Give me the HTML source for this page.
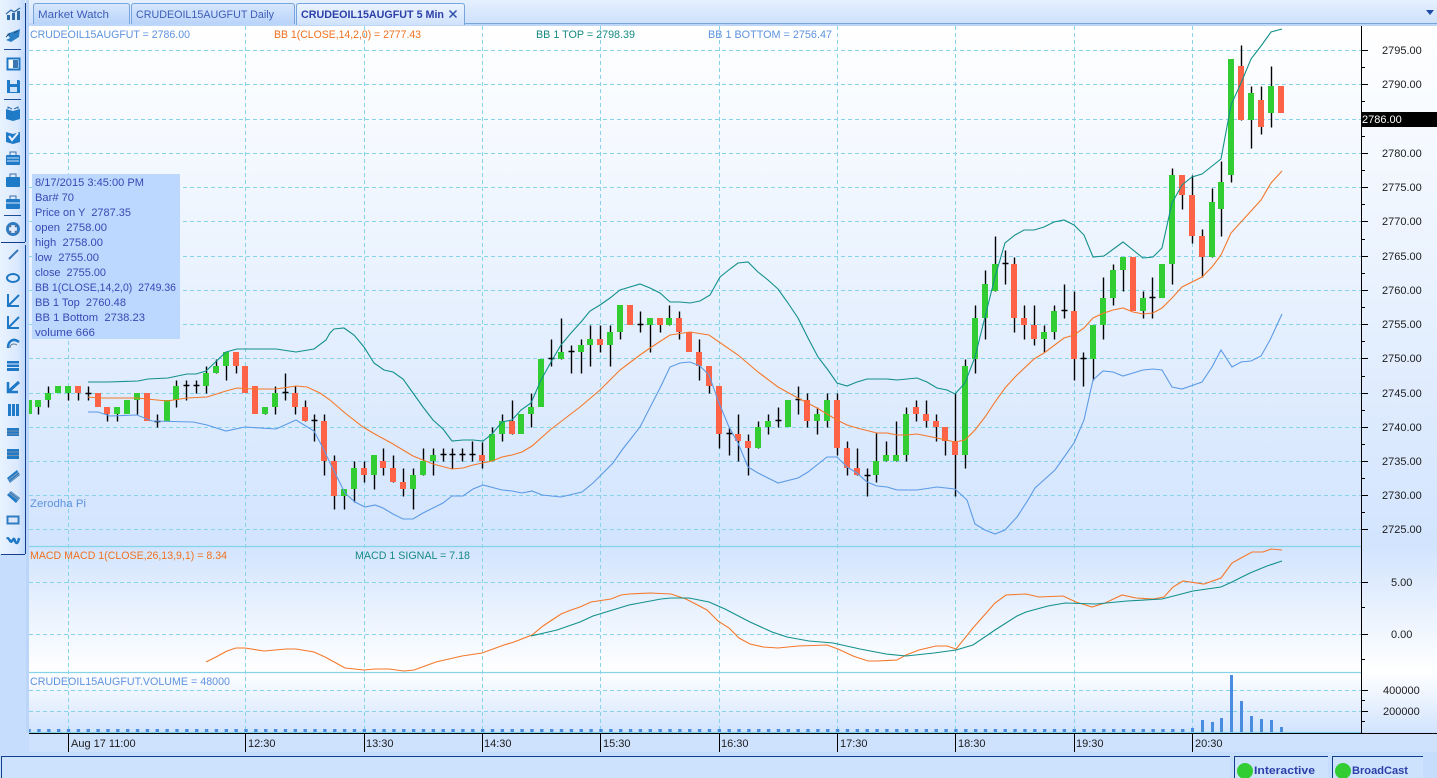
<!DOCTYPE html>
<html lang="en"><head><meta charset="utf-8"><title>Zerodha Pi</title>
<style>
html,body{margin:0;padding:0;background:#c6ddfd;width:1437px;height:778px;overflow:hidden}
svg{display:block}
text{font-family:"Liberation Sans",Arial,sans-serif;font-size:11px;white-space:pre}
.ax{fill:#1c1c1c}
.tip{fill:#3a48b4}
</style></head><body>
<svg width="1437" height="778" viewBox="0 0 1437 778" xmlns="http://www.w3.org/2000/svg">
<defs>
<linearGradient id="p1" x1="0" y1="0" x2="0" y2="1"><stop offset="0" stop-color="#fff"/><stop offset="1" stop-color="#d2e4fe"/></linearGradient>
<linearGradient id="p2" x1="0" y1="0" x2="0" y2="1"><stop offset="0" stop-color="#d2e4fe"/><stop offset="1" stop-color="#fff"/></linearGradient>
<linearGradient id="tb" x1="0" y1="0" x2="1" y2="0"><stop offset="0" stop-color="#e9f3ff"/><stop offset=".7" stop-color="#dbe9fe"/><stop offset="1" stop-color="#bfd8fa"/></linearGradient>
<linearGradient id="tab" x1="0" y1="0" x2="0" y2="1"><stop offset="0" stop-color="#d8e8fe"/><stop offset="1" stop-color="#b9d4fa"/></linearGradient>
<linearGradient id="tabA" x1="0" y1="0" x2="0" y2="1"><stop offset="0" stop-color="#ecf4ff"/><stop offset="1" stop-color="#cfe2fc"/></linearGradient>
<linearGradient id="top" x1="0" y1="0" x2="0" y2="1"><stop offset="0" stop-color="#e6f0fe"/><stop offset="1" stop-color="#cfe1fb"/></linearGradient>
</defs>

<!-- base -->
<rect width="1437" height="778" fill="#c6ddfd"/>
<rect x="0" y="0" width="1437" height="23" fill="url(#top)"/>
<rect x="0" y="23" width="1437" height="3" fill="#bcd7f9"/>

<!-- panes -->
<rect x="29" y="26" width="1408" height="520" fill="url(#p1)"/>
<rect x="29" y="546" width="1408" height="126" fill="url(#p2)"/>
<rect x="29" y="672" width="1408" height="60" fill="url(#p1)"/>
<rect x="29" y="733" width="1408" height="19" fill="#cfe2fd"/>

<!-- grid -->
<path d="M29 50.5H1361M29 84.5H1361M29 119.5H1361M29 153.5H1361M29 187.5H1361M29 221.5H1361M29 256.5H1361M29 290.5H1361M29 324.5H1361M29 358.5H1361M29 393.5H1361M29 427.5H1361M29 461.5H1361M29 495.5H1361M29 529.5H1361M29 582.5H1361M29 634.5H1361M29 690.5H1361M29 711.5H1361" stroke="#86d3ea" stroke-dasharray="4 3" fill="none"/>
<path d="M68.5 26V732M245.5 26V732M364.5 26V732M482.5 26V732M600.5 26V732M719.5 26V732M837.5 26V732M955.5 26V732M1074.5 26V732M1192.5 26V732" stroke="#86d3ea" stroke-dasharray="4 3" fill="none"/>
<path d="M29 546.5H1361M29 672.5H1361M29 732.5H1361" stroke="#86d3ea" stroke-width="1.2" fill="none"/>

<!-- wicks -->
<path transform="translate(.5 .5)" stroke="#000" stroke-width="1.4" fill="none" d="M38 400V414M48 386V407M68 386V400M78 386V400M88 386V400M85 393H91M107 407V421M117 407V421M137 393V414M157 414V427M154 421H160M176 380V407M186 380V400M183 385H189M196 380V393M193 385H199M206 366V393M216 359V373M226 352V380M236 352V373M265 407V414M275 386V414M285 373V400M282 392H288M295 386V414M305 400V421M314 414V441M311 420H317M324 414V475M334 455V509M344 489V509M354 461V502M364 461V482M374 455V489M383 448V475M393 455V482M403 468V496M413 468V509M423 448V475M433 448V475M443 448V461M440 454H446M452 448V468M449 454H455M462 448V461M459 454H465M472 441V461M469 454H475M482 442V468M492 427V461M502 414V441M512 400V434M531 393V427M551 339V366M548 358H554M561 318V359M571 345V373M568 351H574M581 339V373M590 325V366M600 325V352M610 325V366M620 305V339M640 311V332M637 324H643M650 318V352M660 318V332M669 305V325M679 311V339M699 339V380M709 366V393M719 386V448M729 427V455M726 433H732M738 414V461M748 434V475M758 421V448M768 414V434M778 407V427M775 420H781M798 386V414M795 399H801M807 393V427M817 407V434M827 393V427M837 393V455M847 441V475M857 448V475M867 468V496M864 475H870M876 433V482M886 441V461M896 421V461M906 407V461M916 400V421M926 400V427M936 414V441M945 427V455M955 393V496M965 359V468M975 305V373M985 270V339M995 236V291M1005 250V284M1002 263H1008M1014 257V332M1024 305V339M1034 305V345M1044 325V352M1054 305V339M1064 284V318M1061 310H1067M1074 291V380M1083 352V386M1080 358H1086M1093 325V380M1103 277V339M1113 264V305M1123 257V291M1143 291V318M1152 277V318M1149 297H1155M1172 168V284M1182 175V209M1192 175V243M1202 229V277M1212 188V257M1221 161V236M1231 59V182M1241 45V120M1251 86V148M1261 86V134M1271 66V127"/>

<!-- green bodies -->
<path stroke="#32cd32" stroke-width="6" fill="none" d="M38 400V407M48 393V400M58 386V393M68 386V393M117 407V414M127 400V414M137 393V400M167 400V421M176 386V400M206 373V386M216 366V373M226 352V366M265 407V414M275 393V407M344 489V496M354 468V489M374 455V475M413 475V489M423 461V475M433 455V461M492 434V461M502 421V434M521 414V434M531 407V414M541 359V407M561 352V359M581 345V352M590 339V345M610 332V345M620 305V332M650 318V325M669 318V325M758 427V448M768 421V427M788 400V427M817 414V421M827 400V421M876 461V475M886 455V461M896 455V461M906 414V455M965 366V455M975 318V359M985 284V318M995 264V291M1044 332V339M1054 311V332M1093 325V359M1103 298V325M1113 270V298M1123 257V270M1143 298V311M1162 264V298M1172 175V264M1212 202V257M1221 182V209M1231 59V175M1251 93V120M1271 86V113"/>
<rect x="29" y="400" width="3" height="14" fill="#32cd32"/>
<!-- red bodies -->
<path stroke="#ff6347" stroke-width="6" fill="none" d="M78 386V393M98 393V407M107 407V414M147 393V421M236 352V366M245 366V393M255 386V414M295 393V407M305 407V421M324 421V461M334 461V496M364 468V475M383 461V468M393 468V482M403 482V489M482 455V461M512 421V434M600 339V345M630 305V325M660 318V325M679 318V332M689 332V352M699 352V366M709 366V386M719 386V434M738 434V441M748 441V448M807 400V421M837 400V448M847 448V468M857 468V475M916 407V414M926 414V421M936 421V427M945 427V441M955 441V455M1014 264V318M1024 318V325M1034 325V339M1074 311V359M1133 257V311M1182 175V195M1192 195V236M1202 236V257M1241 66V120M1261 100V127M1281 86V113"/>

<!-- BB top -->
<polyline fill="none" stroke="#12908a" stroke-width="1.1" points="88,382 108,382 138,381 148,379 168,378 187,374 196,374 206,371 226,352 237,349 276,349 296,352 314,349 326,340 330,333 334,329 344,328 354,335 364,347 374,363 384,370 393,372 403,379 413,393 423,407 433,420 443,429 452,441 463,440 473,440 483,441 492,434 502,422 512,420 521,410 531,403 541,380 551,362 561,345 571,333 581,322 590,311 600,305 610,298 620,290 640,284 650,288 660,293 670,302 680,302 690,303 700,301 710,295 720,277 730,269 738,263 748,262 758,272 768,280 778,289 788,303 798,318 808,338 818,357 828,370 837,383 847,386 857,382 867,379 887,379 897,380 917,378 927,382 937,388 947,390 955,394 965,383 975,357 985,317 995,277 1005,243 1015,235 1024,230 1034,230 1044,227 1054,222 1064,220 1074,225 1084,235 1093,257 1104,256 1123,242 1143,258 1153,257 1162,248 1172,203 1182,185 1192,177 1202,174 1221,159 1231,105 1241,83 1251,59 1261,46 1271,32 1282,29"/>
<!-- BB mid -->
<polyline fill="none" stroke="#f5782a" stroke-width="1.1" points="88,397 98,398 137,398 167,401 187,398 207,397 226,391 237,388 253,389 276,389 296,386 307,387 320,393 330,400 345,413 363,427 373,433 393,444 413,456 433,464 452,469 463,468 473,465 492,461 502,457 512,455 522,452 532,446 550,430 563,420 580,407 600,390 620,370 640,355 650,348 670,335 690,332 709,335 738,355 758,372 778,387 798,398 817,408 837,420 847,425 857,428 877,433 887,433 897,435 907,435 917,434 937,438 955,442 965,440 975,430 985,417 995,402 1005,388 1015,377 1034,359 1044,353 1064,338 1074,335 1084,328 1093,318 1104,313 1113,310 1123,308 1133,312 1143,314 1153,313 1162,308 1172,298 1182,287 1202,277 1212,267 1221,255 1231,233 1241,222 1261,200 1271,183 1282,171"/>
<!-- BB bottom -->
<polyline fill="none" stroke="#5c9ae6" stroke-width="1.1" points="88,412 98,412 110,416 137,415 152,421 193,422 207,425 226,431 245,427 276,429 296,420 314,431 324,450 330,463 345,493 355,502 365,507 375,505 383,508 393,514 403,519 413,519 423,513 443,503 452,496 463,496 473,489 483,485 502,490 512,491 522,493 532,491 542,495 561,497 582,492 593,483 613,463 622,450 640,427 660,388 670,367 680,363 690,362 700,366 709,375 719,403 729,427 738,443 748,467 758,473 778,483 798,478 808,472 827,457 837,457 847,467 857,473 867,482 877,486 887,487 897,490 917,490 937,487 955,489 967,500 975,524 985,530 995,534 1005,530 1017,517 1028,500 1035,488 1055,470 1074,443 1084,420 1093,380 1103,371 1113,372 1123,376 1143,370 1153,369 1162,370 1172,387 1182,389 1202,382 1212,367 1221,350 1232,367 1241,362 1251,361 1261,356 1270,340 1282,314"/>

<!-- MACD -->
<polyline fill="none" stroke="#f5782a" stroke-width="1.1" points="206,662 216,657 227,651 236,648 245,648 264,651 286,649 296,649 314,652 325,657 336,663 345,668 364,670 375,669 389,669 404,671 414,670 436,662 462,656 482,653 504,645 514,642 532,635 543,626 561,614 571,610 580,607 591,602 611,599 621,595 629,594 650,593 671,594 686,599 707,610 718,621 729,628 739,638 750,644 763,647 778,648 798,646 827,645 838,649 853,656 868,661 877,661 897,660 906,655 919,650 936,646 947,646 956,649 973,628 995,603 1006,595 1026,594 1039,597 1063,596 1076,602 1092,607 1105,603 1122,595 1136,598 1153,599 1164,597 1173,587 1183,581 1204,584 1221,578 1232,563 1241,558 1252,552 1263,552 1271,549 1282,550"/>
<polyline fill="none" stroke="#12908a" stroke-width="1.1" points="531,636 557,630 580,622 593,616 629,605 661,599 671,598 689,598 709,602 725,609 750,622 772,632 787,637 809,641 833,643 860,649 886,654 906,656 934,653 956,650 973,645 995,630 1017,616 1026,612 1048,606 1065,603 1096,604 1127,601 1162,599 1193,591 1221,587 1232,582 1250,573 1267,566 1282,561"/>

<!-- volume -->
<path d="M27.4 730.5H1190" stroke="#4a8de0" stroke-width="3" stroke-dasharray="3.4 6.46" fill="none"/>
<g fill="#4a8de0">
<rect x="1191" y="728" width="3" height="4"/><rect x="1201" y="720" width="3" height="12"/><rect x="1211" y="722" width="3" height="10"/><rect x="1220" y="718" width="3" height="14"/><rect x="1230" y="675" width="3" height="57"/><rect x="1240" y="701" width="3" height="31"/><rect x="1250" y="716" width="3" height="16"/><rect x="1260" y="719" width="3" height="13"/><rect x="1270" y="720" width="3" height="12"/><rect x="1280" y="727" width="3" height="5"/>
</g>

<!-- axes -->
<path d="M1361.5 26V733M29 733.5H1437" stroke="#000" fill="none"/>
<path stroke="#000" fill="none" d="M1361 50.5H1368M1361 84.5H1368M1361 119.5H1368M1361 153.5H1368M1361 187.5H1368M1361 221.5H1368M1361 256.5H1368M1361 290.5H1368M1361 324.5H1368M1361 358.5H1368M1361 393.5H1368M1361 427.5H1368M1361 461.5H1368M1361 495.5H1368M1361 529.5H1368M1361 67.5H1365M1361 101.5H1365M1361 136.5H1365M1361 170.5H1365M1361 204.5H1365M1361 239.5H1365M1361 273.5H1365M1361 307.5H1365M1361 341.5H1365M1361 376.5H1365M1361 410.5H1365M1361 444.5H1365M1361 478.5H1365M1361 512.5H1365M1361 582.5H1368M1361 634.5H1368M1361 607.5H1365M1361 659.5H1365M1361 690.5H1368M1361 711.5H1368M1361 700.5H1365M1361 721.5H1365M68.5 733V752M245.5 733V752M364.5 733V752M482.5 733V752M600.5 733V752M719.5 733V752M837.5 733V752M955.5 733V752M1074.5 733V752M1192.5 733V752"/>
<g class="ax">
<text class="ax" x="1382" y="54">2795.00</text><text class="ax" x="1382" y="88">2790.00</text><text class="ax" x="1382" y="157">2780.00</text><text class="ax" x="1382" y="191">2775.00</text><text class="ax" x="1382" y="225">2770.00</text><text class="ax" x="1382" y="260">2765.00</text><text class="ax" x="1382" y="294">2760.00</text><text class="ax" x="1382" y="328">2755.00</text><text class="ax" x="1382" y="362">2750.00</text><text class="ax" x="1382" y="397">2745.00</text><text class="ax" x="1382" y="431">2740.00</text><text class="ax" x="1382" y="465">2735.00</text><text class="ax" x="1382" y="499">2730.00</text><text class="ax" x="1382" y="533">2725.00</text>
<text class="ax" x="1391" y="586">5.00</text><text class="ax" x="1391" y="638">0.00</text>
<text class="ax" x="1383" y="694">400000</text><text class="ax" x="1383" y="715">200000</text>
<text class="ax" x="71" y="747">Aug 17 11:00</text><text class="ax" x="248" y="747">12:30</text><text class="ax" x="366" y="747">13:30</text><text class="ax" x="484" y="747">14:30</text><text class="ax" x="603" y="747">15:30</text><text class="ax" x="721" y="747">16:30</text><text class="ax" x="840" y="747">17:30</text><text class="ax" x="958" y="747">18:30</text><text class="ax" x="1076" y="747">19:30</text><text class="ax" x="1195" y="747">20:30</text>
</g>
<rect x="1362" y="112" width="75" height="15" fill="#000"/>
<text x="1362" y="123" fill="#fff">2786.00</text>

<!-- legends -->
<text x="30" y="38" fill="#5e92de" textLength="160" lengthAdjust="spacingAndGlyphs">CRUDEOIL15AUGFUT = 2786.00</text>
<text x="274" y="38" fill="#f0701e" textLength="147" lengthAdjust="spacingAndGlyphs">BB 1(CLOSE,14,2,0) = 2777.43</text>
<text x="536" y="38" fill="#178a80" textLength="99" lengthAdjust="spacingAndGlyphs">BB 1 TOP = 2798.39</text>
<text x="708" y="38" fill="#5e92de" textLength="124" lengthAdjust="spacingAndGlyphs">BB 1 BOTTOM = 2756.47</text>
<text x="30" y="507" fill="#5e92de" textLength="56" lengthAdjust="spacingAndGlyphs">Zerodha Pi</text>
<text x="30" y="559" fill="#f0701e" textLength="197" lengthAdjust="spacingAndGlyphs">MACD MACD 1(CLOSE,26,13,9,1) = 8.34</text>
<text x="355" y="559" fill="#178a80" textLength="115" lengthAdjust="spacingAndGlyphs">MACD 1 SIGNAL = 7.18</text>
<text x="30" y="685" fill="#5e92de" textLength="200" lengthAdjust="spacingAndGlyphs">CRUDEOIL15AUGFUT.VOLUME = 48000</text>

<!-- tooltip -->
<rect x="32" y="174" width="148" height="165" fill="#bcd8fe"/>
<text class="tip" x="35" y="186" textLength="109" lengthAdjust="spacingAndGlyphs">8/17/2015 3:45:00 PM</text>
<text class="tip" x="35" y="201" textLength="39" lengthAdjust="spacingAndGlyphs">Bar# 70</text>
<text class="tip" x="35" y="216" textLength="96" lengthAdjust="spacingAndGlyphs">Price on Y  2787.35</text>
<text class="tip" x="35" y="231" textLength="72" lengthAdjust="spacingAndGlyphs">open  2758.00</text>
<text class="tip" x="35" y="246" textLength="68" lengthAdjust="spacingAndGlyphs">high  2758.00</text>
<text class="tip" x="35" y="261" textLength="64" lengthAdjust="spacingAndGlyphs">low  2755.00</text>
<text class="tip" x="35" y="276" textLength="71" lengthAdjust="spacingAndGlyphs">close  2755.00</text>
<text class="tip" x="35" y="291" textLength="141" lengthAdjust="spacingAndGlyphs">BB 1(CLOSE,14,2,0)  2749.36</text>
<text class="tip" x="35" y="306" textLength="91" lengthAdjust="spacingAndGlyphs">BB 1 Top  2760.48</text>
<text class="tip" x="35" y="321" textLength="110" lengthAdjust="spacingAndGlyphs">BB 1 Bottom  2738.23</text>
<text class="tip" x="35" y="336" textLength="60" lengthAdjust="spacingAndGlyphs">volume 666</text>

<!-- tabs -->
<path d="M465 23.5H1437" stroke="#76a6dc" fill="none"/>
<path d="M33.5 24V6Q33.5 3.5 36 3.5H127Q129.5 3.5 129.5 6V24" fill="url(#tab)" stroke="#76a6dc"/>
<path d="M131.5 24V6Q131.5 3.5 134 3.5H292Q294.5 3.5 294.5 6V24" fill="url(#tab)" stroke="#76a6dc"/>
<path d="M296.5 25V6Q296.5 3.5 299 3.5H462Q464.5 3.5 464.5 6V25" fill="url(#tabA)" stroke="#76a6dc"/>
<text x="38" y="18" fill="#3e5db8" textLength="71" lengthAdjust="spacingAndGlyphs">Market Watch</text>
<text x="136" y="18" fill="#3e5db8" textLength="138" lengthAdjust="spacingAndGlyphs">CRUDEOIL15AUGFUT Daily</text>
<text x="301" y="18" fill="#2c3fa8" style="font-weight:bold" textLength="143" lengthAdjust="spacingAndGlyphs">CRUDEOIL15AUGFUT 5 Min</text>
<path d="M449.5 10.5L456.5 17.5M456.5 10.5L449.5 17.5" stroke="#2c4fa8" stroke-width="1.5" fill="none"/>
<path d="M1426 10H1434L1430 15Z" fill="#1c4ca8"/>

<!-- left toolbar -->
<rect x="0" y="0" width="25" height="554" fill="url(#tb)"/>
<rect x="26" y="0" width="3" height="778" fill="#bcd6fa"/>
<rect x="0" y="733" width="29" height="23" fill="#c6ddfd"/>
<path d="M25.5 3V242M25.5 245V554M1 242.5H25M1 554.5H25" stroke="#113f8c" fill="none"/>
<path d="M4 49.5H21M4 99.5H21M4 215.5H21" stroke="#1d4f97" fill="none"/>
<g fill="#1f7ac8" stroke="none">
<!-- chart -->
<path d="M7 15h3v5H7zM12 13h3v7h-3zM17 11h3v9h-3z" fill="#2f6ca8"/>
<path d="M6 14L11 10L14 12L20 8" stroke="#2f6ca8" fill="none" stroke-width="1.3"/>
<!-- rocket -->
<path d="M7 34L20 29L19 37L11 42L6 40L10 38Z" fill="#2a7ec4"/>
<path d="M6 37L10 33M14 33L18 31" stroke="#24507f" fill="none"/>
<!-- panel -->
<rect x="7.5" y="58.5" width="12" height="11" fill="#fff" stroke="#1f78c6" stroke-width="2"/><rect x="13" y="60" width="5" height="8" fill="#3a78b2"/>
<!-- floppy -->
<path d="M7 80h12l1 1v12H7z"/><rect x="10" y="80" width="7" height="4" fill="#d7e8fc"/><rect x="10" y="87" width="7" height="5" fill="#cde2fb"/>
<!-- book -->
<path d="M6 109L13 111V121L6 119ZM20 109L13 111V121L20 119Z"/><path d="M8 109V107L12 109M18 109V107L14 109" stroke="#2f6ca8" fill="none"/>
<path d="M6 132L13 134V144L6 142ZM20 132L13 134V144L20 142Z"/><path d="M9 136L12 140L18 133" stroke="#e8f2ff" stroke-width="2" fill="none"/>
<!-- cases -->
<rect x="6" y="155" width="14" height="10" rx="1"/><path d="M10 155V152H16V155" stroke="#3a6ea8" fill="none"/><path d="M7 158H19M7 161H19" stroke="#cfe2fa" fill="none"/>
<rect x="6" y="177" width="14" height="10" rx="1"/><path d="M10 177V174H16V177" stroke="#3a6ea8" fill="none"/>
<rect x="6" y="199" width="14" height="10" rx="1"/><path d="M10 199V196H16V199" stroke="#3a6ea8" fill="none"/><path d="M6 203H20" stroke="#d9e9fc" fill="none"/>
<!-- lifebuoy -->
<circle cx="13" cy="229" r="5.5" fill="none" stroke="#2f7cc2" stroke-width="3"/><path d="M9 225L11 227M17 225L15 227M9 233L11 231M17 233L15 231" stroke="#5a6f8a" fill="none" stroke-width="1.5"/>
<!-- tools -->
<path d="M9 259L18 250" stroke="#3a78b8" stroke-width="2" fill="none"/>
<ellipse cx="13" cy="278" rx="6" ry="4" fill="none" stroke="#1f78c6" stroke-width="2"/>
<path d="M8 294V306H19M9 305L19 295" stroke="#1f78c6" stroke-width="2" fill="none"/>
<path d="M8 316V328H19M9 327L19 317" stroke="#1f78c6" stroke-width="2" fill="none"/>
<path d="M8 348C8 340 14 338 19 342" stroke="#1f78c6" stroke-width="2.5" fill="none"/><path d="M10 348C10 344 14 343 17 345" stroke="#6a7f98" fill="none"/>
<path d="M7 361H19V371H7Z" fill="#1f78c6"/><path d="M7 364H19M7 367.5H19" stroke="#dbe9fc" fill="none"/>
<path d="M8 382V392H18" stroke="#1f78c6" stroke-width="2.5" fill="none"/><path d="M9 391L19 382" stroke="#1f78c6" stroke-width="3" fill="none"/>
<rect x="8" y="404" width="11" height="12"/><path d="M11.5 404V416M15.5 404V416" stroke="#dbe9fc" fill="none"/>
<rect x="7" y="428" width="12" height="8"/><path d="M7 431H19M7 434H19" stroke="#7a8fa8" fill="none"/>
<rect x="7" y="449" width="12" height="10"/><path d="M7 452H19M7 455.5H19" stroke="#7a8fa8" fill="none"/>
<path d="M7 478L17 470L20 475L10 483Z"/><path d="M8.5 480L18 472.5M10 482L19.5 474" stroke="#8a9fb8" fill="none"/>
<path d="M7 495L11 491L20 498L16 503Z"/><path d="M9 493L18 500M10.5 491.5L19 498.5" stroke="#8a9fb8" fill="none"/>
<rect x="7.5" y="516.5" width="11" height="7" fill="#dbe8fb" stroke="#2f7cc2" stroke-width="2"/>
<path d="M7 539C9 536 10 544 12 541S14 538 15 541S18 544 19 538" stroke="#1f78c6" stroke-width="2.5" fill="none"/>
</g>

<!-- status bar -->
<rect x="1" y="756" width="1229" height="22" fill="#cde2fd"/>
<rect x="1234" y="756" width="94" height="22" fill="#cde2fd"/>
<rect x="1332" y="756" width="91" height="22" fill="#cde2fd"/>
<path d="M1.5 778V756.5H1230M1234.5 778V756.5H1328M1332.5 778V756.5H1423" stroke="#113f8c" fill="none"/>
<circle cx="1245" cy="771" r="8" fill="#32cd32"/>
<circle cx="1343" cy="771" r="8" fill="#32cd32"/>
<text x="1254" y="774" fill="#2c3fa8" style="font-weight:bold" textLength="61" lengthAdjust="spacingAndGlyphs">Interactive</text>
<text x="1352" y="774" fill="#2c3fa8" style="font-weight:bold" textLength="56" lengthAdjust="spacingAndGlyphs">BroadCast</text>
</svg>
</body></html>
